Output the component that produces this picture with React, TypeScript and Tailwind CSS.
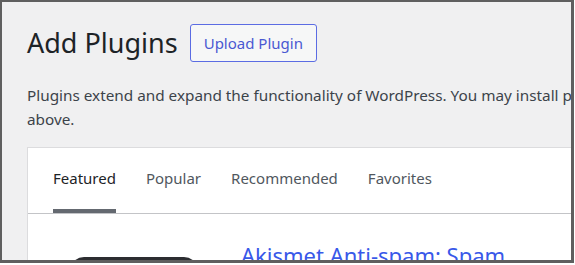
const TABS = [
  { id: "featured", label: "Featured", active: true },
  { id: "popular", label: "Popular" },
  { id: "recommended", label: "Recommended" },
  { id: "favorites", label: "Favorites" },
]

export default function App() {
  return (
    <div className="w-[575px] h-[265px] bg-white overflow-hidden font-['Noto_Sans',sans-serif]">
      <div className="w-[574px] h-[263px] border-t-2 border-l-2 border-r-[3px] border-b-[3px] border-[#5f5f5f] bg-[#f0f0f1] overflow-hidden">
        <div className="w-[900px] pl-[25px] pt-[22px]">
          {/* Header */}
          <div className="flex items-center gap-3">
            <h1 className="text-[27px] leading-[36px] text-[#1d2327] font-normal">Add Plugins</h1>
            <button className="h-[38px] px-[13px] border border-[#5b6ce3] rounded-[3px] bg-[#f6f7f7] text-[15px] text-[#4a59d2]">
              Upload Plugin
            </button>
          </div>

          <p className="mt-[21px] text-[15.3px] leading-[24px] text-[#3c434a] whitespace-nowrap">
            Plugins extend and expand the functionality of WordPress. You may install plugins in the WordPress Plugin Directory right from here, or upload a plugin in .zip format by clicking the button
            <br />
            above.
          </p>

          {/* Card */}
          <div className="mt-4 bg-white border border-[#dcdcde]">
            <div className="flex gap-[30px] pl-[25px] border-b border-[#c3c4c7]">
              {TABS.map((tab) => (
                <div key={tab.id} className="flex flex-col pt-[18px]">
                  <span
                    className={`text-[15px] leading-[24px] ${
                      tab.active ? "text-[#1d2327]" : "text-[#50575e]"
                    }`}
                  >
                    {tab.label}
                  </span>
                  <div className={`mt-[19px] h-1 ${tab.active ? "bg-[#646970]" : "bg-transparent"}`} />
                </div>
              ))}
            </div>

            <div className="flex pl-[42px] pt-[27px] gap-[43px] h-[200px]">
              <div className="mt-[16px] w-[128px] h-[128px] rounded-[14px] bg-[#2c2d31] shrink-0" />
              <a href="#" className="w-[290px] text-[22px] leading-[28px] text-[#3858e9]">
                Akismet Anti-spam: Spam Protection
              </a>
            </div>
          </div>
        </div>
      </div>
    </div>
  )
}
